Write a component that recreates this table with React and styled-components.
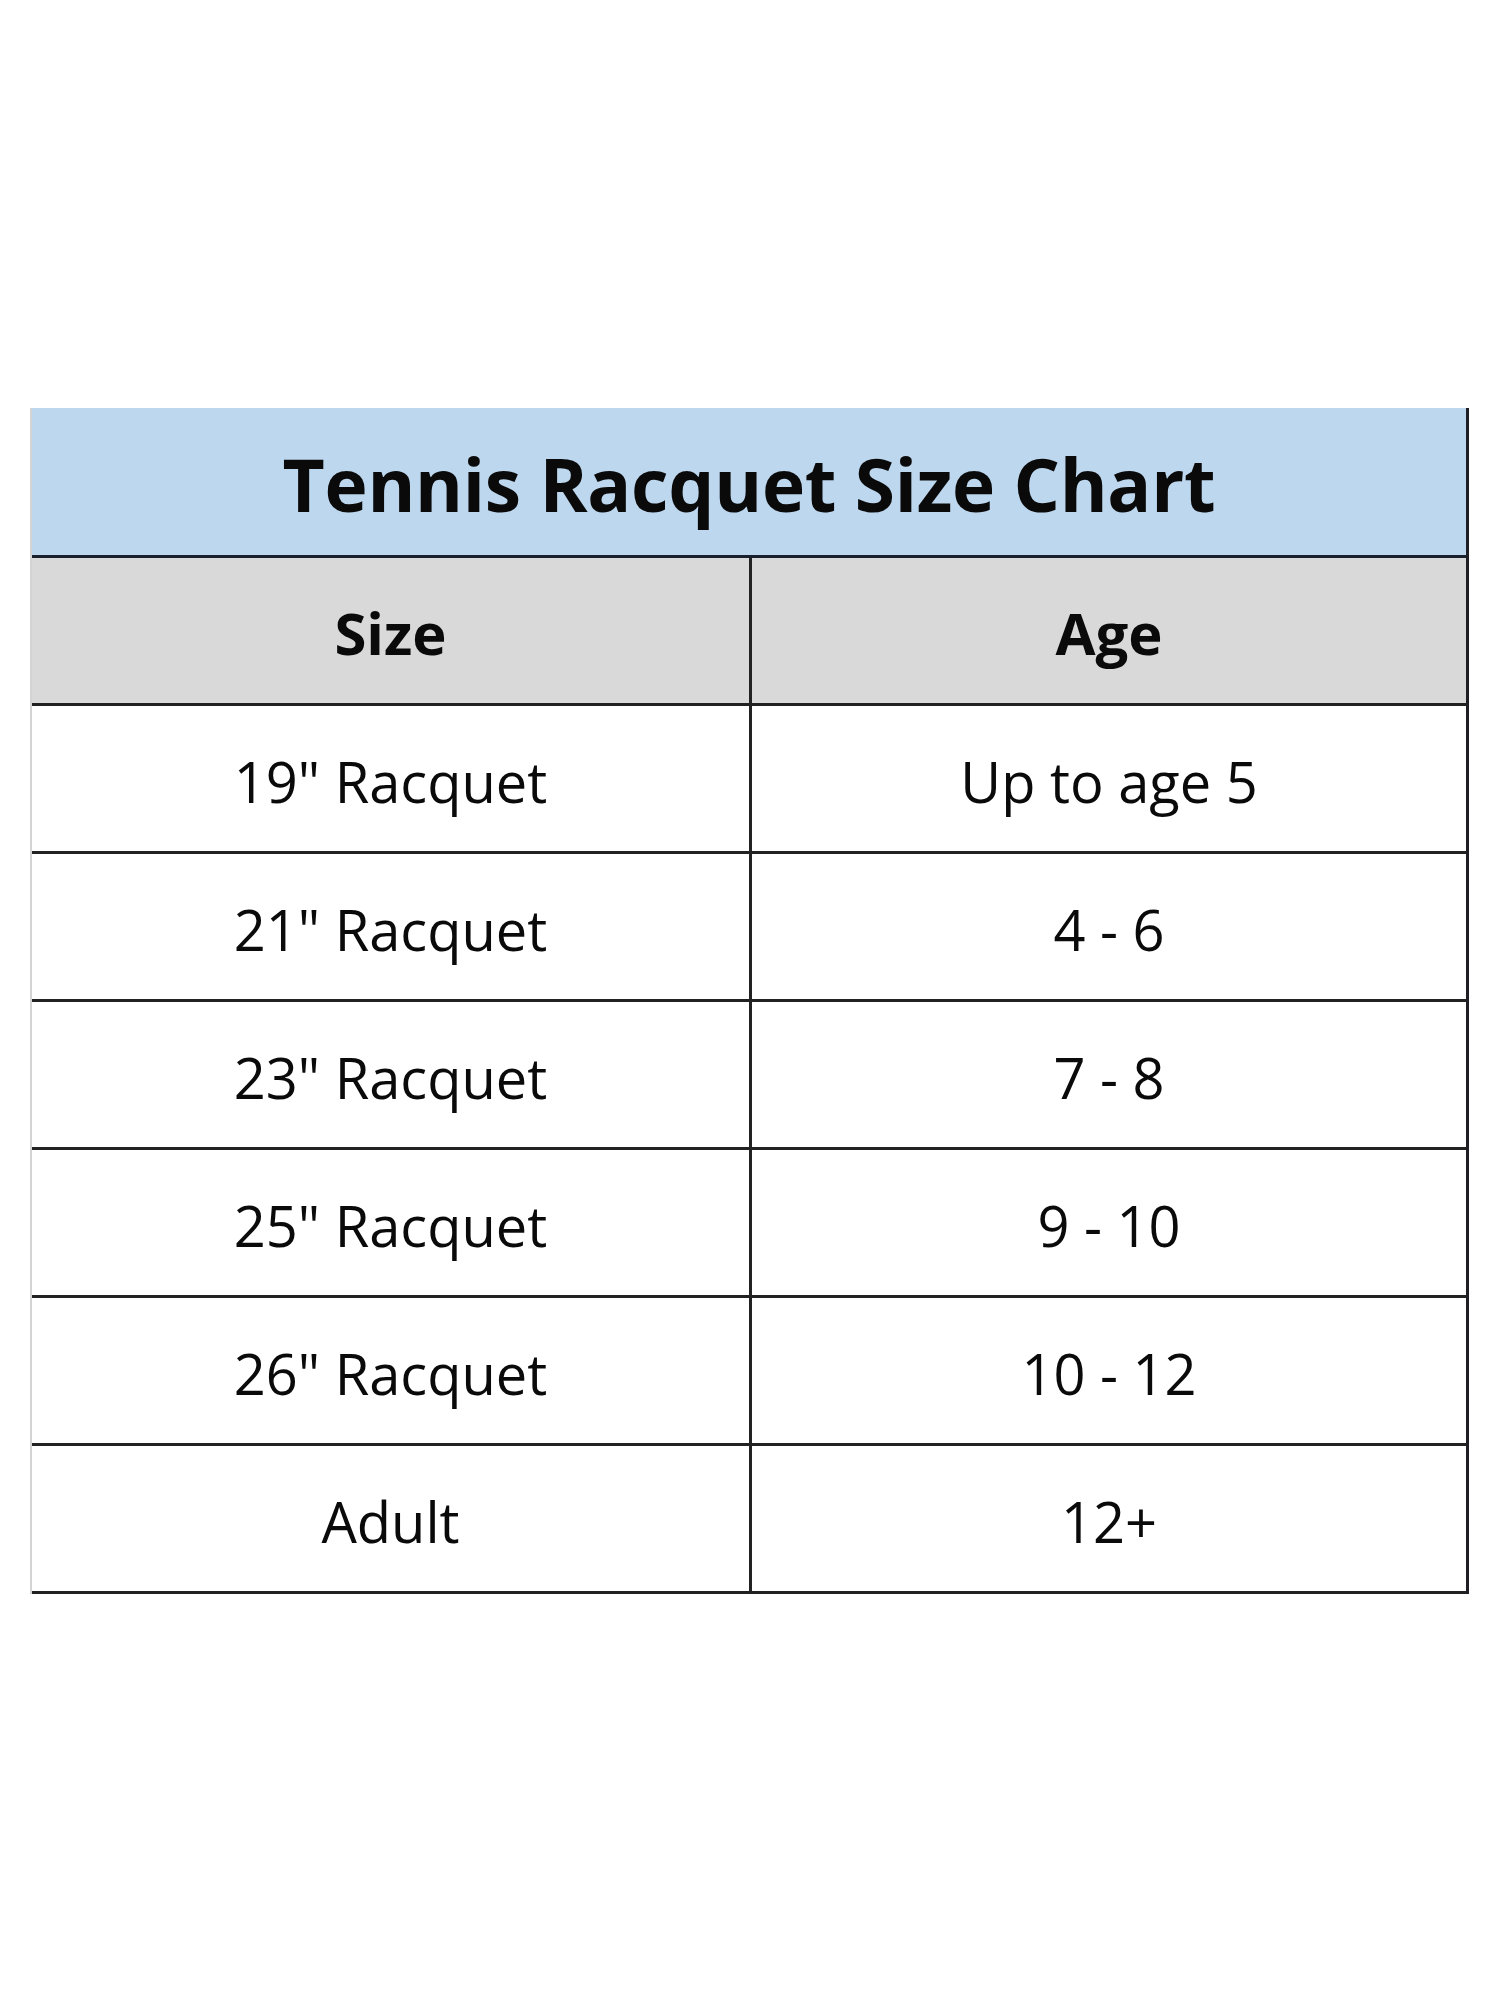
import React from "react";
import styled, { createGlobalStyle } from "styled-components";

const Global = createGlobalStyle`
  html, body { margin: 0; padding: 0; background: #ffffff; }
  body { font-family: "Open Sans", "Liberation Sans", sans-serif; color: #0a0a0a; }
`;

const Page = styled.div`
  width: 1500px;
  height: 2000px;
  box-sizing: border-box;
  padding: 408px 31px 0 30px;
`;

const Chart = styled.div`
  display: grid;
  grid-template-columns: 720px 1fr;
  border-left: 2px solid #d4d4d4;
  border-right: 3px solid #1e1e24;
`;

const TitleRow = styled.div`
  grid-column: 1 / -1;
  box-sizing: content-box;
  height: 143px;
  padding-top: 4px;
  background: #bdd7ee;
  border-bottom: 3px solid #17202c;
  display: flex;
  align-items: center;
  justify-content: center;
  font-weight: 700;
  font-size: 73px;
  letter-spacing: -0.3px;
  line-height: 1;
  white-space: nowrap;
`;

const Cell = styled.div`
  box-sizing: content-box;
  height: 141px;
  padding-top: 4px;
  display: flex;
  align-items: center;
  justify-content: center;
  border-bottom: 3px solid #222222;
  border-right: ${(p) => (p.$first ? "3px solid #222222" : "none")};
  background: ${(p) => (p.$head ? "#d9d9d9" : "#ffffff")};
  font-weight: ${(p) => (p.$head ? 700 : 400)};
  font-size: ${(p) => (p.$head ? "58px" : "56px")};
  line-height: 1;
  white-space: nowrap;
`;

const rows = [
  ['19" Racquet', "Up to age 5"],
  ['21" Racquet', "4 - 6"],
  ['23" Racquet', "7 - 8"],
  ['25" Racquet', "9 - 10"],
  ['26" Racquet', "10 - 12"],
  ["Adult", "12+"],
];

export default function App() {
  return (
    <>
      <Global />
      <Page>
        <Chart>
          <TitleRow>Tennis Racquet Size Chart</TitleRow>
          <Cell $head $first>Size</Cell>
          <Cell $head>Age</Cell>
          {rows.map(([size, age]) => (
            <React.Fragment key={size}>
              <Cell $first>{size}</Cell>
              <Cell>{age}</Cell>
            </React.Fragment>
          ))}
        </Chart>
      </Page>
    </>
  );
}
